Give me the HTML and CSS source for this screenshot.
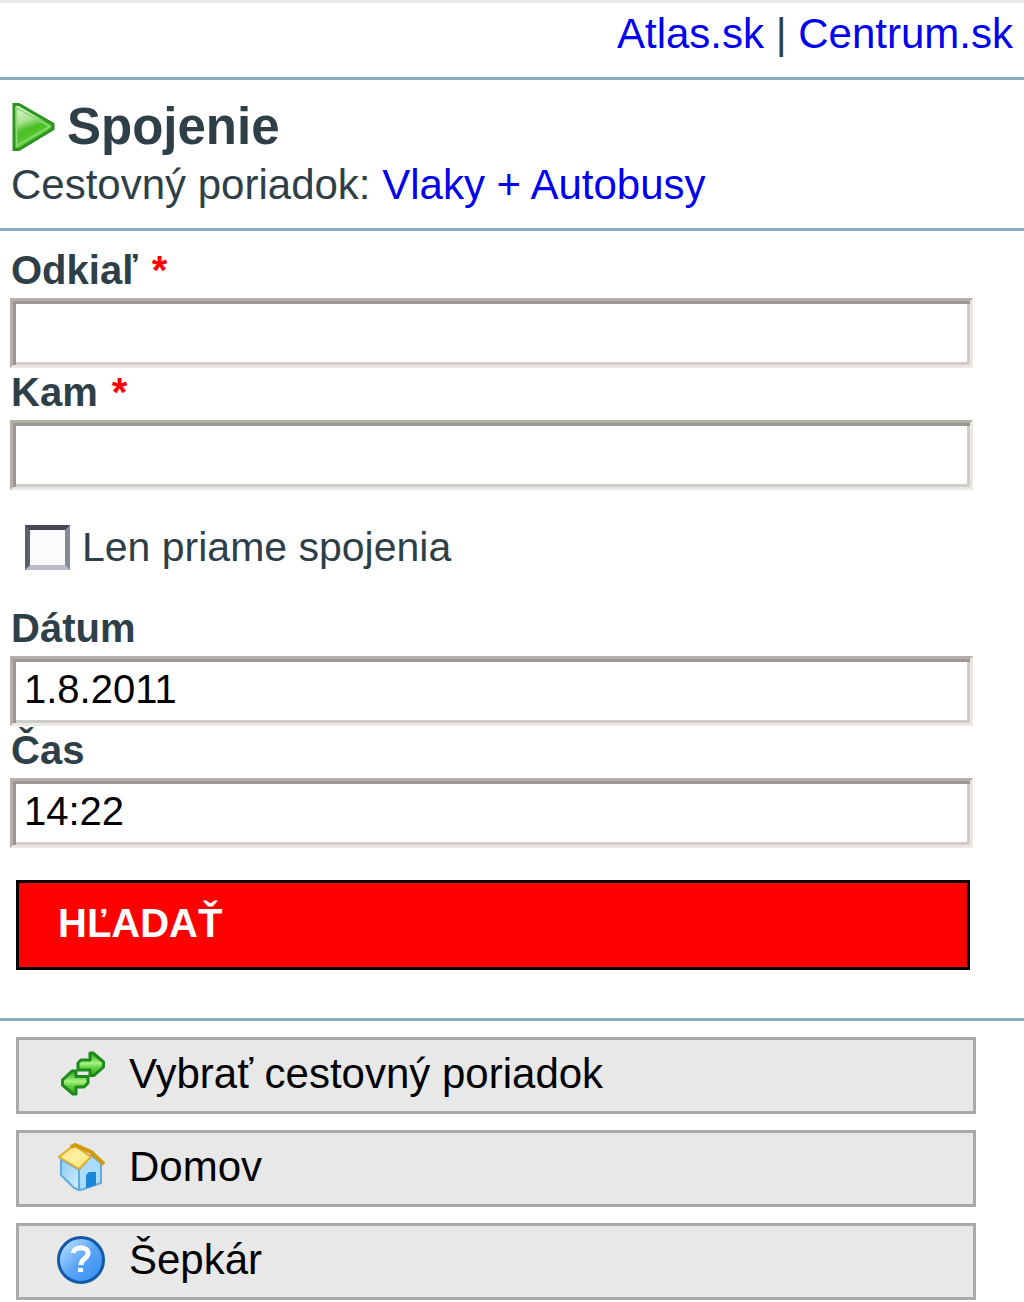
FILE: index.html
```html
<!DOCTYPE html>
<html lang="sk">
<head>
  <meta charset="UTF-8">
  <meta name="viewport" content="width=device-width, initial-scale=1.0">
  <title>Spojenie</title>

  <link rel="stylesheet" href="styles.css">
</head>
<body>
  <div class="top">
    <a href="#">Atlas.sk</a> | <a href="#">Centrum.sk</a>
  </div>

  <div class="head">
    <h1>
      <svg class="play" width="46" height="50" viewBox="0 0 46 50">
        <defs>
          <linearGradient id="gplay" x1="0.2" y1="0" x2="0.5" y2="0.9">
            <stop offset="0" stop-color="#e2f6da"/>
            <stop offset="0.4" stop-color="#a5e28c"/>
            <stop offset="0.6" stop-color="#49c022"/>
            <stop offset="1" stop-color="#62cc3c"/>
          </linearGradient>
        </defs>
        <path d="M3 2.500H8L42 22V27L8 47.500H3Z" fill="url(#gplay)" stroke="#2c9222" stroke-width="3"/>
        <path d="M5.500 6L39 24.500L5.500 44Z" fill="none" stroke="#8fda78" stroke-width="1.500"/>
      </svg>
      Spojenie
    </h1>
    <p>Cestovný poriadok: <a href="#">Vlaky + Autobusy</a></p>
  </div>

  <form class="search">
    <label class="name" for="from">Odkiaľ <span class="req">*</span></label>
    <input class="field" type="text" id="from">
    <label class="name" for="to">Kam <span class="req">*</span></label>
    <input class="field" type="text" id="to">

    <div class="direct">
      <input type="checkbox" id="direct">
      <label for="direct">Len priame spojenia</label>
    </div>

    <label class="name" for="date">Dátum</label>
    <input class="field" type="text" id="date" value="1.8.2011">
    <label class="name" for="time">Čas</label>
    <input class="field" type="text" id="time" value="14:22">

    <button class="btn" type="button">HĽADAŤ</button>
  </form>

  <div class="menu">
    <a href="#">
      <svg width="48" height="48" viewBox="0 0 48 48">
        <defs>
          <linearGradient id="garr" x1="0" y1="0" x2="0" y2="1">
            <stop offset="0.1" stop-color="#3fb52c"/>
            <stop offset="0.45" stop-color="#a8f283"/>
            <stop offset="0.65" stop-color="#62d43f"/>
            <stop offset="1" stop-color="#35a824"/>
          </linearGradient>
        </defs>
        <path d="M21 13L24 10H33V3H36L46.500 12V17L37 25.500H33V20H21Z" fill="url(#garr)" stroke="#1f8a1b" stroke-width="3" stroke-linejoin="round"/>
        <path d="M5.500 30L15 21H19V26.500H31V33L27 37H19V44H16L5.500 35Z" fill="url(#garr)" stroke="#1f8a1b" stroke-width="3" stroke-linejoin="round"/>
      </svg>
      <span>Vybrať cestovný poriadok</span>
    </a>
    <a href="#">
      <svg width="48" height="48" viewBox="0 0 48 48">
        <defs>
          <linearGradient id="gwall" x1="0" y1="0" x2="1" y2="1">
            <stop offset="0" stop-color="#8ccdf6"/>
            <stop offset="1" stop-color="#d2eeff"/>
          </linearGradient>
          <linearGradient id="groof" x1="0" y1="0" x2="1" y2="1">
            <stop offset="0" stop-color="#ffe07a"/>
            <stop offset="0.5" stop-color="#fff0a0"/>
            <stop offset="1" stop-color="#ffdc62"/>
          </linearGradient>
        </defs>
        <path d="M4 16L22 27V47L17 45L4 32Z" fill="url(#gwall)" stroke="#62a9dc" stroke-width="2"/>
        <path d="M22 27L34 12L44 20V40L24 47L22 46Z" fill="#a9dcfc" stroke="#62a9dc" stroke-width="2"/>
        <path d="M29 32L32 29H39V42L29 45Z" fill="#1b86d5"/>
        <path d="M17 2L34 14L22 26L2 14Z" fill="url(#groof)" stroke="#dfae2b" stroke-width="2"/>
        <path d="M14 4L18 2L34 9L47 21" fill="none" stroke="#d09a10" stroke-width="4"/>
      </svg>
      <span>Domov</span>
    </a>
    <a href="#">
      <svg width="48" height="48" viewBox="0 0 48 48">
        <defs>
          <linearGradient id="gball" x1="0" y1="0" x2="1" y2="1">
            <stop offset="0.1" stop-color="#b9dcff"/>
            <stop offset="0.5" stop-color="#5ba6f7"/>
            <stop offset="1" stop-color="#2f8bf0"/>
          </linearGradient>
        </defs>
        <circle cx="24" cy="24" r="22.500" fill="url(#gball)" stroke="#1259a8" stroke-width="3"/>
        <path d="M16 17C17 10 31 10 31 17C31 23 24 22 24 29" fill="none" stroke="#fff" stroke-width="5"/>
        <rect x="21" y="32" width="5" height="4" fill="#fff"/>
      </svg>
      <span>Šepkár</span>
    </a>
  </div>
</body>
</html>
```

FILE: styles.css
```css
*{
  box-sizing: border-box;
}
body{
  margin: 0;
  background: white;
  border-top: 3px solid #e8e8e8;
  font-family: "Liberation Sans", Arial, sans-serif;
  font-size: 42px;
  line-height: 50px;
  color: #2f3f48;
}
a{
  color: #0000ee;
  text-decoration: none;
}
.top{
  text-align: right;
  padding: 6px 11px 18px;
  border-bottom: 3px solid #8aabba;
}
.head{
  padding: 17px 11px 18px;
  border-bottom: 3px solid #8aabba;
}
.head h1{
  display: flex;
  align-items: center;
  gap: 10px;
  margin: 0 0 3px;
  font-size: 51px;
  line-height: 60px;
}
.head p{
  margin: 0;
}

/* search form */
.search{
  padding: 15px 51px 48px 10px;
  border-bottom: 3px solid #8aabba;
}
.name{
  display: block;
  padding: 0 0 4px 1px;
  font-size: 40px;
  font-weight: bold;
  line-height: 48px;
}
.req{
  margin-left: 3px;
  color: red;
}
.field{
  display: block;
  width: 100%;
  height: 70px;
  padding: 0 11px 4px;
  border: 3px solid;
  border-color: #b3afaa #ebe7e2 #ebe7e2 #b3afaa;
  border-radius: 0;
  box-shadow: inset 3px 3px #9d9792, inset -3px -3px #d0ccc7;
  background: white;
  color: black;
  font-family: inherit;
  font-size: 40px;
  outline: none;
}
.direct{
  display: flex;
  align-items: center;
  gap: 12px;
  padding: 32px 15px;
}
.direct label{
  font-size: 41px;
}
.direct input{
  appearance: none;
  width: 45px;
  height: 45px;
  margin: 0;
  border: 5px solid;
  border-color: #454853 #858a99 #b9bbc8 #5c5e69;
  background: #fcfcfe;
}
.btn{
  display: block;
  width: calc(100% - 9px);
  height: 90px;
  margin: 32px 3px 0 6px;
  padding: 0 39px 4px;
  border: 3px solid black;
  background: red;
  color: white;
  font-family: inherit;
  font-size: 40px;
  font-weight: bold;
  text-align: left;
}

/* bottom links */
.menu{
  display: flex;
  flex-direction: column;
  gap: 16px;
  padding: 16px 48px 2px 16px;
}
.menu a{
  display: flex;
  align-items: center;
  gap: 24px;
  height: 77px;
  padding: 0 38px 4px;
  border: 3px solid #a9a9a9;
  background: #e8e8e8;
  color: black;
}
```
